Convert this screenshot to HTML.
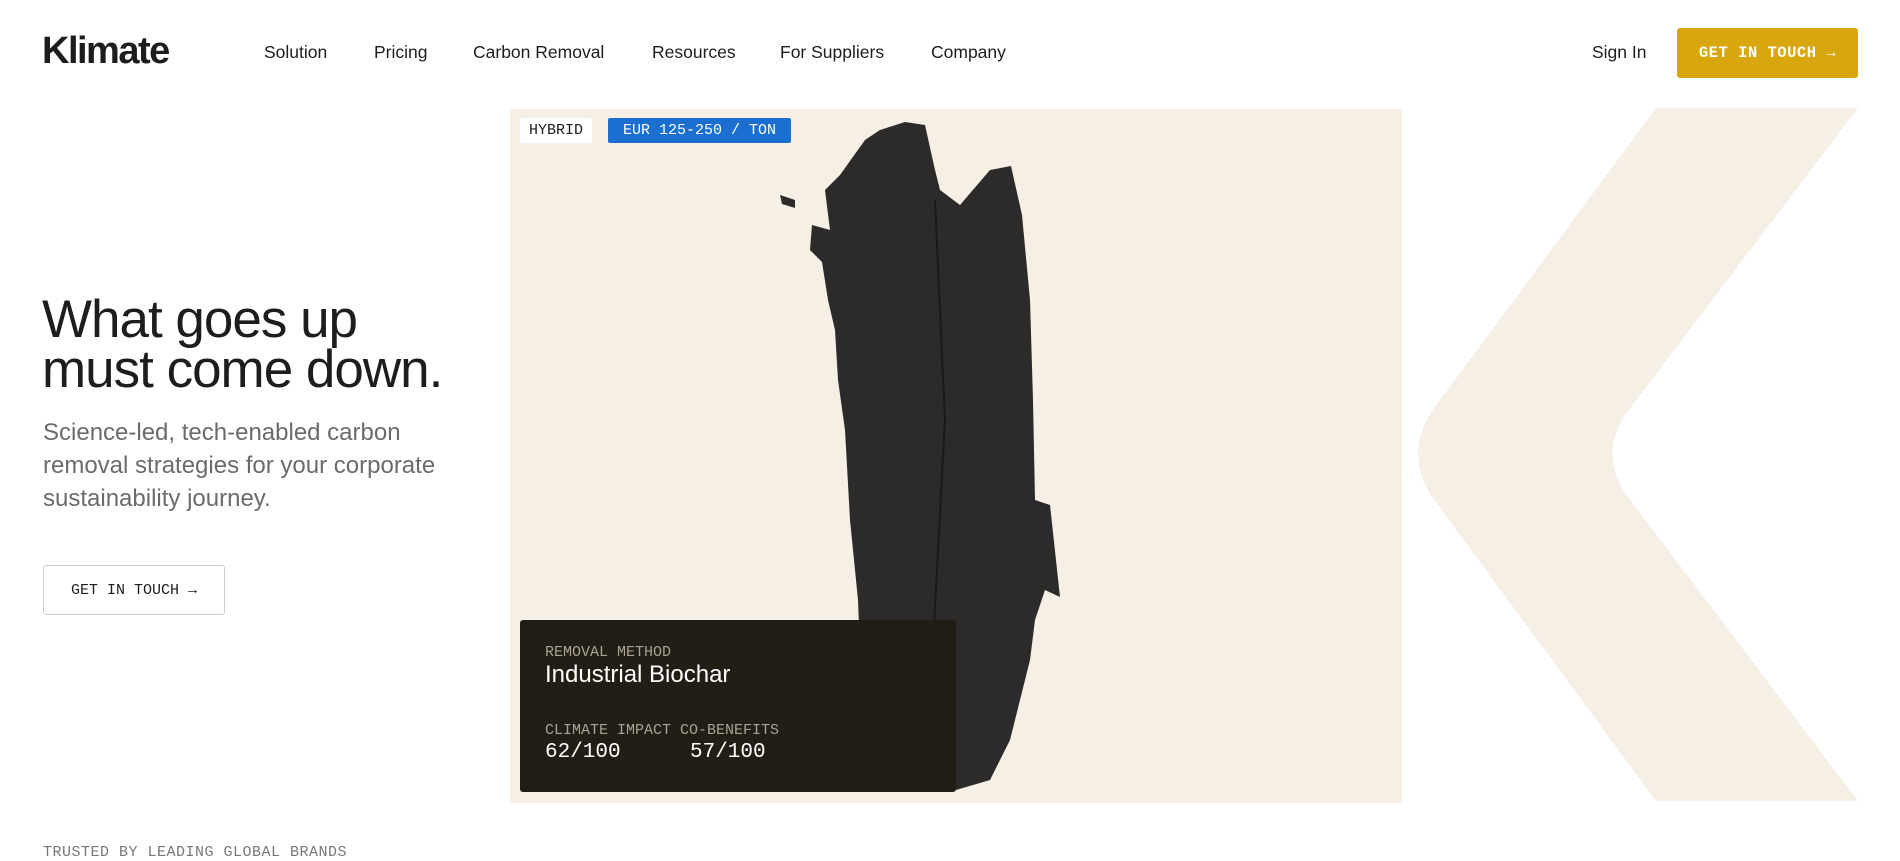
<!DOCTYPE html>
<html><head><meta charset="utf-8"><style>
*{margin:0;padding:0;box-sizing:border-box}
body{width:1900px;height:861px;overflow:hidden;background:#fff;font-family:"Liberation Sans",sans-serif;color:#1d1d1b;position:relative}
.abs{position:absolute}
.mono{font-family:"Liberation Mono",monospace}
.nav a{position:absolute;top:42px;font-size:17.5px;color:#1d1d1b;text-decoration:none}
</style></head><body>
<div class="abs" style="left:42px;top:30px;font-size:38px;font-weight:bold;letter-spacing:-1.5px">Klimate</div>
<div class="nav">
<a style="left:264px">Solution</a>
<a style="left:374px">Pricing</a>
<a style="left:473px">Carbon Removal</a>
<a style="left:652px">Resources</a>
<a style="left:780px">For Suppliers</a>
<a style="left:931px">Company</a>
<a style="left:1592px">Sign In</a>
</div>
<div class="abs mono" style="left:1677px;top:28px;width:181px;height:50px;background:#d8a70e;border-radius:3px;color:#fff;font-size:15.5px;font-weight:bold;display:flex;align-items:center;justify-content:center;letter-spacing:0.5px">GET IN TOUCH&nbsp;→</div>

<svg class="abs" style="left:0;top:0" width="1900" height="861">
<path d="M1656 108 L1858 108 L1625 415 Q1600 454 1625 493 L1858 801 L1656 801 L1432 497 Q1404 454 1432 411 Z" fill="#f5efe5"/>
<rect x="510" y="109" width="892" height="694" fill="#f5efe5"/>
<path d="M905 122 L925 125 L935 170 L940 190 L960 205 L990 170 L1011 166 L1022 215 L1030 300 L1033 400 L1035 500 L1050 505 L1060 597 L1045 590 L1035 620 L1030 660 L1010 740 L990 780 L956 790 L900 790 L860 650 L858 600 L850 520 L845 430 L838 380 L835 330 L828 300 L822 262 L810 250 L812 225 L830 230 L825 190 L840 175 L865 140 L880 130 Z" fill="#2c2b2a"/>
<path d="M780 195 L795 200 L795 208 L782 204 Z" fill="#2c2b2a"/>
<path d="M935 200 L945 420 L930 700" stroke="#1a1a1a" stroke-width="2" fill="none"/>
</svg>
<div class="abs mono" style="left:520px;top:118px;height:25px;padding:0 9px;background:#fff;border-radius:2px;font-size:15px;line-height:25px">HYBRID</div>
<div class="abs mono" style="left:608px;top:118px;height:25px;width:183px;background:#1a6fd1;border-radius:2px;font-size:15px;line-height:25px;color:#fff;text-align:center">EUR 125-250 / TON</div>

<div class="abs" style="left:520px;top:620px;width:436px;height:172px;background:#231e15;border-radius:3px;color:#fff">
<div class="mono" style="position:absolute;left:25px;top:24px;font-size:15px;color:#a8a293">REMOVAL METHOD</div>
<div style="position:absolute;left:25px;top:41px;font-size:24px">Industrial Biochar</div>
<div class="mono" style="position:absolute;left:25px;top:102px;font-size:15px;color:#a8a293">CLIMATE IMPACT CO-BENEFITS</div>
<div class="mono" style="position:absolute;left:25px;top:121px;font-size:21px">62/100</div>
<div class="mono" style="position:absolute;left:170px;top:121px;font-size:21px">57/100</div>
</div>

<div class="abs" style="left:42px;top:295px;font-size:53px;line-height:50px;font-weight:500;letter-spacing:-1px">What goes up<br>must come down.</div>
<div class="abs" style="left:43px;top:416px;font-size:24px;line-height:33px;color:#6b6b6b">Science-led, tech-enabled carbon<br>removal strategies for your corporate<br>sustainability journey.</div>
<div class="abs mono" style="left:43px;top:565px;width:182px;height:50px;border:1px solid #ccc;border-radius:3px;font-size:15px;display:flex;align-items:center;justify-content:center">GET IN TOUCH&nbsp;→</div>
<div class="abs mono" style="left:43px;top:844px;font-size:15px;color:#777;letter-spacing:0.5px">TRUSTED BY LEADING GLOBAL BRANDS</div>
</body></html>
